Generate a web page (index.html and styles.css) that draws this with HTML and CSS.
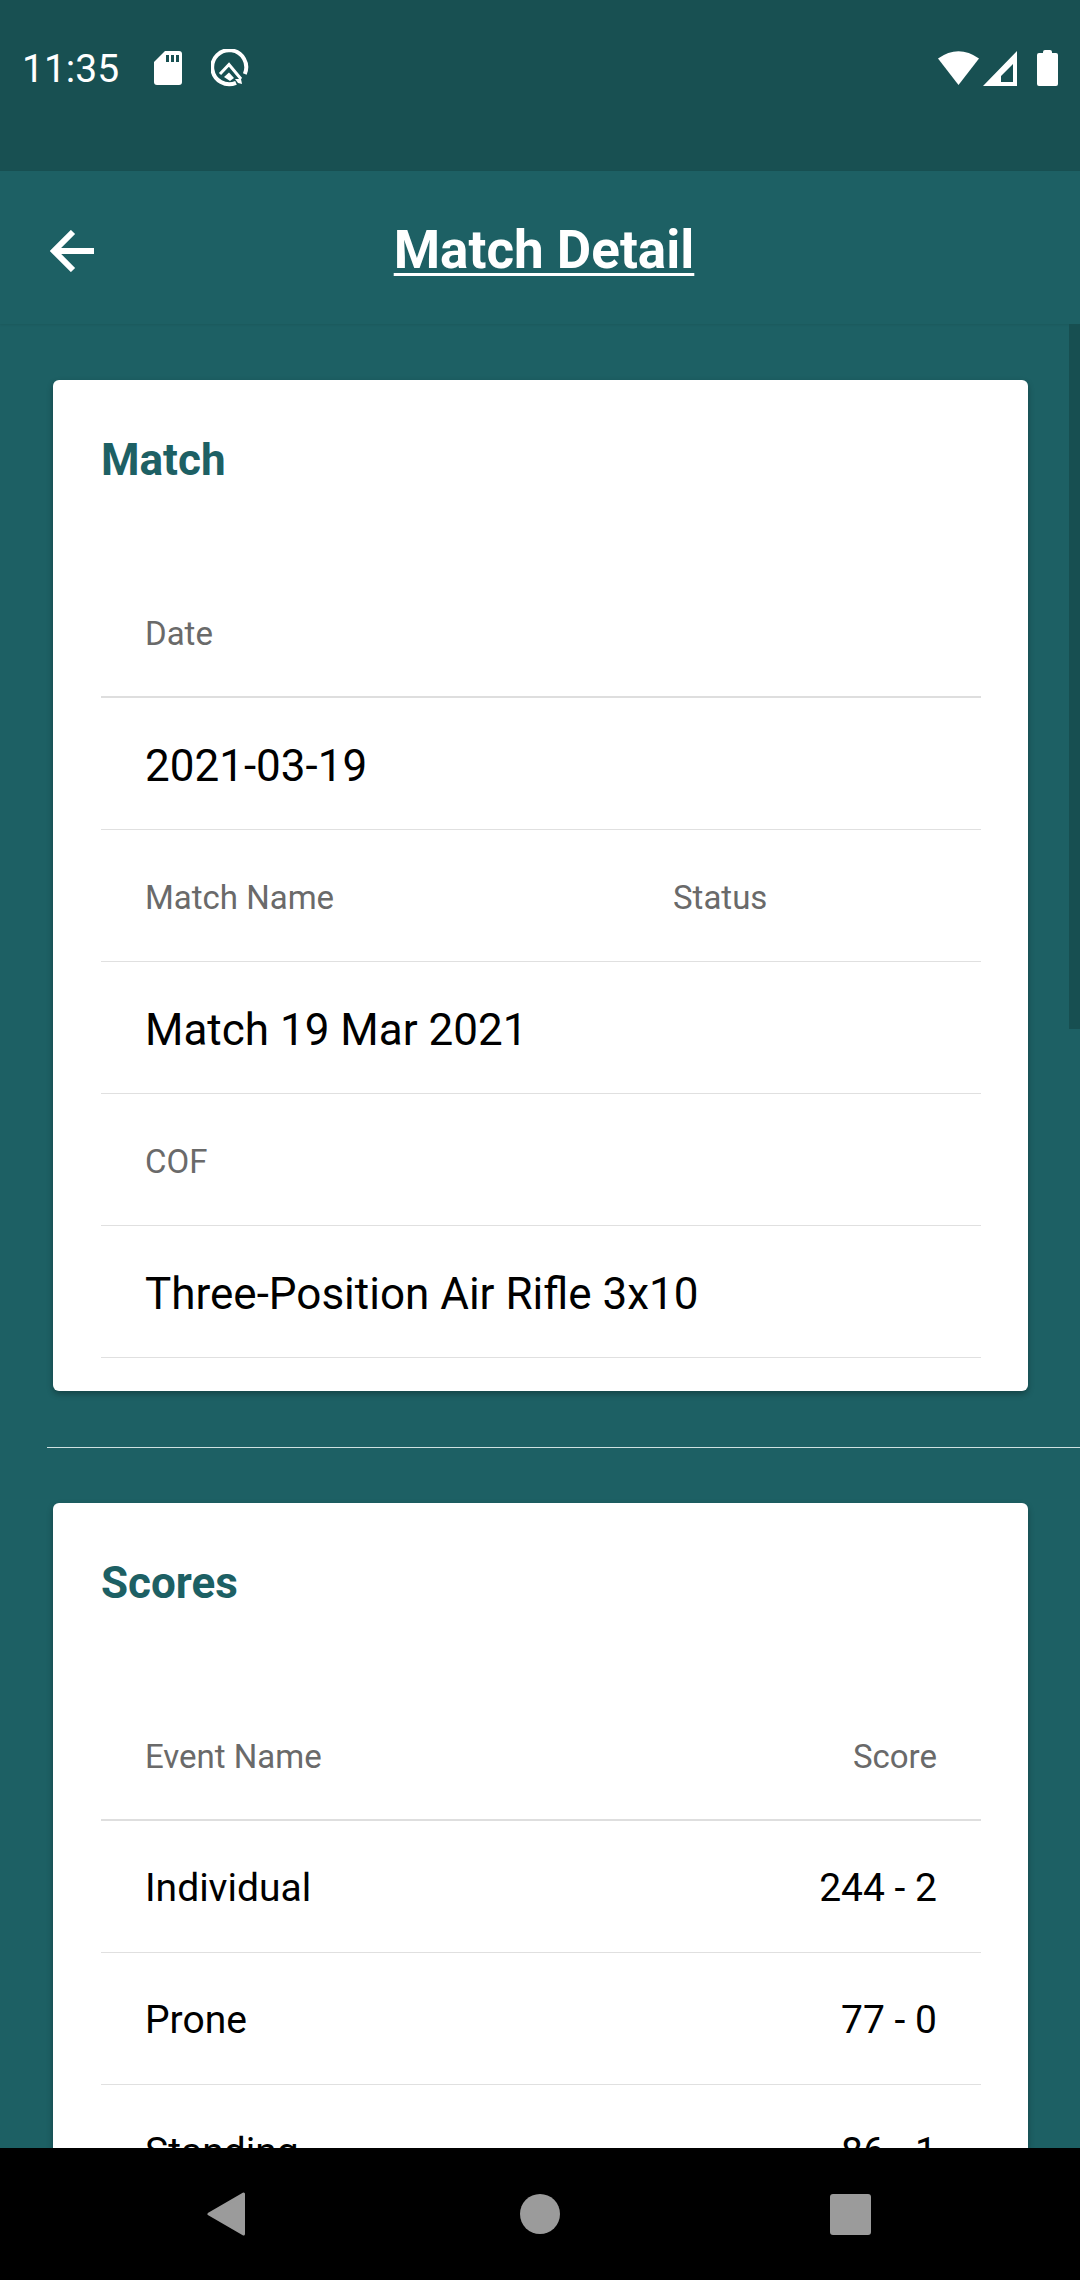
FILE: index.html
```html
<!DOCTYPE html>
<html lang="en">

<head>
    <meta charset="UTF-8">
    <meta name="viewport" content="width=device-width, initial-scale=1.0">
    <title>Match Detail</title>
    <link rel="stylesheet" href="styles.css">
</head>

<body>
    <div class="status-bar">
        <div class="status-left">
            <span class="clock">11:35</span>
            <svg class="sd-icon" viewBox="0 0 28 34" width="28" height="34">
                <path fill="#fff" d="M11 0H25Q28 0 28 3V31Q28 34 25 34H3Q0 34 0 31V11Z" />
                <path fill="#185052" d="M12 4h3v7h-3zM17 4h3v7h-3zM22 4h3v7h-3z" />
            </svg>
            <svg class="q-icon" viewBox="0 0 38 38" width="38" height="38">
                <path fill="none" stroke="#fff" stroke-width="4" d="M25 33.800A17 17 0 1 1 33.800 25" />
                <path fill="none" stroke="#fff" stroke-width="3" d="M9 25L18 15.500L30 30" />
                <path fill="#fff" d="M18 23.500L23 29L19 32L13 28Z" />
                <path fill="#fff" d="M24 30L30 30L31 35L27 34Z" />
            </svg>
        </div>
        <div class="status-right">
            <svg viewBox="0 0 41 34" width="41" height="34">
                <path fill="#fff" d="M0 7.500Q20.500 -7 41 7.500L20.500 34Z" />
            </svg>
            <svg viewBox="0 0 34 35" width="34" height="35">
                <path fill="#fff" fill-rule="evenodd" d="M34 0V35H0ZM30 13L18 25V31H30Z" />
            </svg>
            <svg class="battery" viewBox="0 0 21 36" width="21" height="36">
                <path fill="#fff" d="M6 2Q6 0 8 0H13Q15 0 15 2V3H19Q21 3 21 5V34Q21 36 19 36H2Q0 36 0 34V5Q0 3 2 3H6Z" />
            </svg>
        </div>
    </div>

    <header class="app-bar">
        <svg class="back-icon" viewBox="0 0 44 42" width="44" height="42">
            <path fill="none" stroke="#fff" stroke-width="6" d="M44 21H5M23 2L4 21L23 40" />
        </svg>
        <h1>Match Detail</h1>
    </header>

    <main class="content">
        <section class="card">
            <h2>Match</h2>
            <div class="row label-row first">
                <span>Date</span>
            </div>
            <div class="row value-row big">
                <span>2021-03-19</span>
            </div>
            <div class="row label-row">
                <span class="col-name">Match Name</span>
                <span>Status</span>
            </div>
            <div class="row value-row big">
                <span>Match 19 Mar 2021</span>
            </div>
            <div class="row label-row">
                <span>COF</span>
            </div>
            <div class="row value-row big">
                <span>Three-Position Air Rifle 3x10</span>
            </div>
        </section>

        <hr class="divider">

        <section class="card">
            <h2>Scores</h2>
            <div class="row label-row first spread">
                <span>Event Name</span>
                <span>Score</span>
            </div>
            <div class="row value-row spread">
                <span>Individual</span>
                <span>244 - 2</span>
            </div>
            <div class="row value-row spread">
                <span>Prone</span>
                <span>77 - 0</span>
            </div>
            <div class="row value-row spread">
                <span>Standing</span>
                <span>86 - 1</span>
            </div>
        </section>

        <div class="scrollbar"></div>
    </main>

    <nav class="nav-bar">
        <svg class="nav-back" viewBox="0 0 38 44" width="38" height="44">
            <path fill="#9b9b9b" stroke="#9b9b9b" stroke-width="3" stroke-linejoin="round" d="M36.500 2V42L2 22Z" />
        </svg>
        <svg class="nav-home" viewBox="0 0 40 40" width="40" height="40">
            <circle fill="#9b9b9b" cx="20" cy="20" r="20" />
        </svg>
        <svg viewBox="0 0 41 41" width="41" height="41">
            <rect fill="#9b9b9b" width="41" height="41" rx="3" />
        </svg>
    </nav>
</body>

</html>
```

FILE: styles.css
```css
/* page */
body {
    font-family: Roboto, Arial, sans-serif;
    background-color: #1d6064;
    margin: 0;
    padding: 0;
    width: 1080px;
    height: 2280px;
    display: flex;
    flex-direction: column;
    overflow: hidden;
}

/* status bar */
.status-bar {
    background-color: #185052;
    height: 171px;
    flex: none;
    display: flex;
    justify-content: space-between;
    align-items: flex-start;
    padding: 47px 22px 0 22px;
    box-sizing: border-box;
    color: #fff;
}

.status-left,
.status-right {
    display: flex;
    align-items: center;
}

.clock {
    font-size: 39px;
    font-weight: 400;
    line-height: 38px;
    padding-top: 3px;
    width: 132px;
}

.sd-icon {
    margin-right: 29px;
}

.status-right {
    gap: 4px;
    padding-top: 3px;
}

.status-right .battery {
    margin-left: 16px;
}

/* app bar */
.app-bar {
    background-color: #1d6064;
    height: 153px;
    flex: none;
    display: flex;
    align-items: center;
    justify-content: center;
    position: relative;
    box-shadow: 0 1px 2px rgba(0, 0, 0, 0.08);
}

.back-icon {
    position: absolute;
    left: 50px;
    top: 59px;
}

h1 {
    margin: 5px 0 0 8px;
    color: #fff;
    font-size: 53px;
    font-weight: 700;
    text-decoration: underline;
    text-decoration-thickness: 3px;
    text-underline-offset: 5px;
}

/* content */
.content {
    flex: 1;
    min-height: 0;
    overflow: hidden;
    position: relative;
    padding-top: 56px;
}

.card {
    background-color: #fff;
    width: 975px;
    margin-left: 53px;
    box-sizing: border-box;
    padding: 54px 47px 33px 48px;
    border-radius: 6px;
    box-shadow: 0 3px 6px rgba(0, 0, 0, 0.3);
}

h2 {
    margin: 0;
    color: #1d6064;
    font-size: 44px;
    font-weight: 700;
    line-height: 52px;
}

.row {
    height: 132px;
    box-sizing: border-box;
    display: flex;
    align-items: center;
    padding: 0 44px;
    border-bottom: 1px solid #e0e0e0;
}

.label-row {
    color: #6a6a6a;
    font-size: 33px;
    padding-top: 3px;
}

.label-row.first {
    height: 212px;
    padding-top: 85px;
    border-bottom: 2px solid #dedede;
}

.value-row {
    color: #000;
    font-size: 39px;
    padding-top: 3px;
}

.value-row.big {
    font-size: 44px;
    padding-top: 4px;
}

.spread {
    justify-content: space-between;
}

.col-name {
    width: 528px;
}

.divider {
    margin: 56px 0 55px 47px;
    border: 0;
    height: 1px;
    background-color: #cfe0e0;
}

.scrollbar {
    position: absolute;
    right: 0;
    top: 0;
    width: 11px;
    height: 705px;
    background-color: #174f51;
}

/* nav bar */
.nav-bar {
    background-color: #000;
    height: 132px;
    flex: none;
    display: flex;
    align-items: center;
    padding-left: 207px;
}

.nav-back {
    margin-right: 275px;
}

.nav-home {
    margin-right: 270px;
}
```
